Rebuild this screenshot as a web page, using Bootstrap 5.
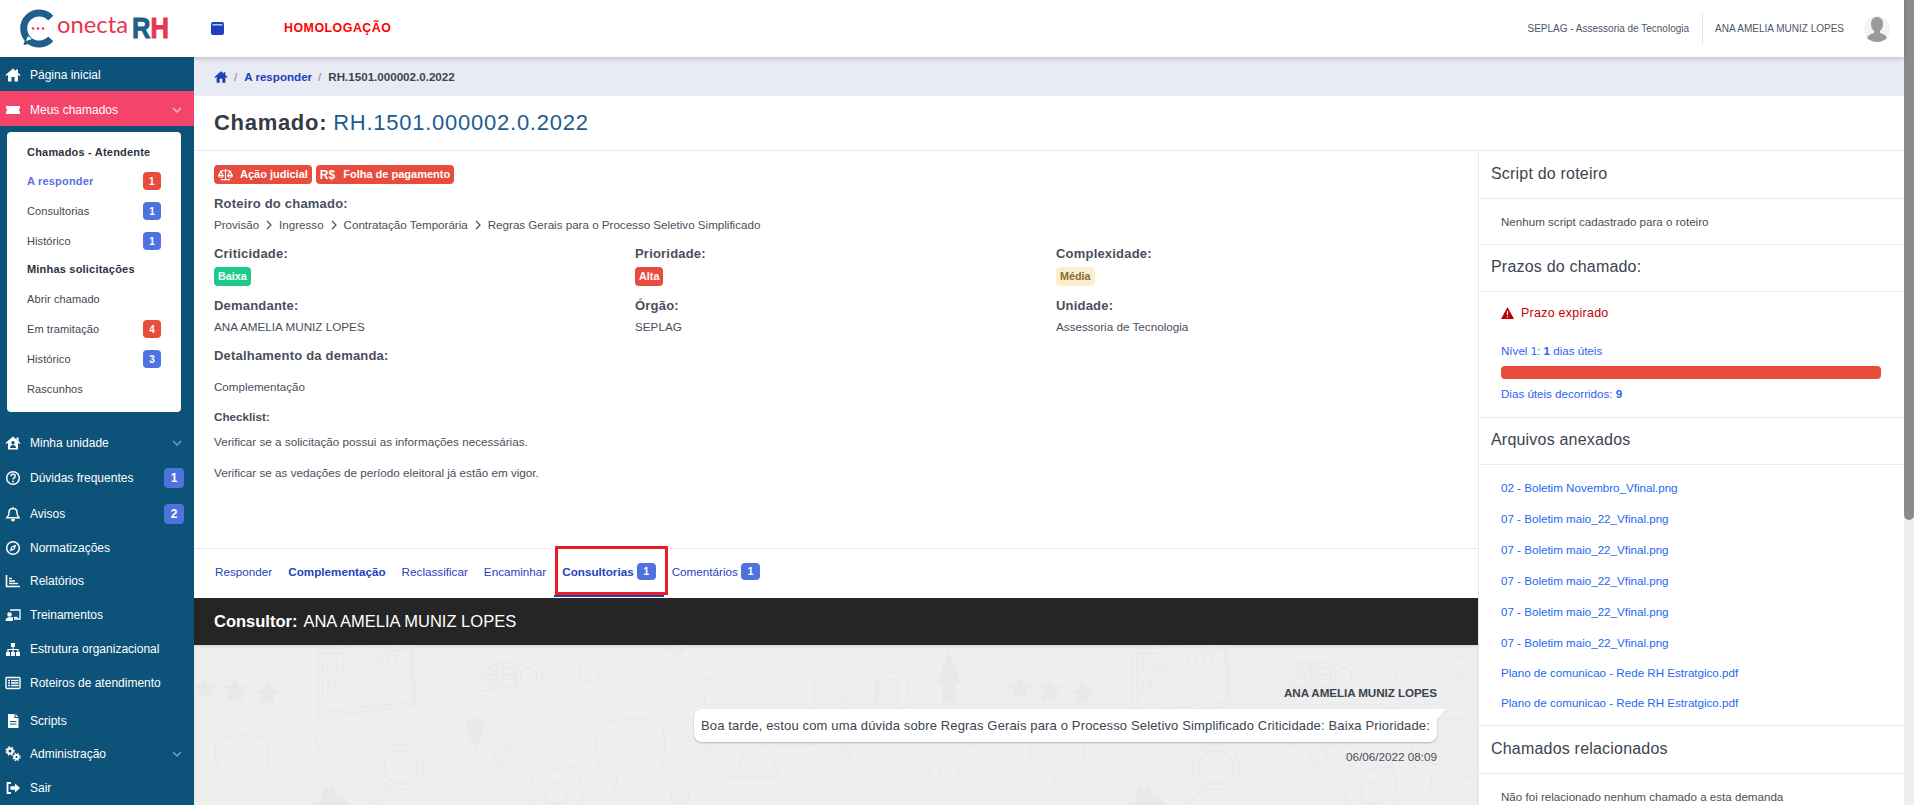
<!DOCTYPE html>
<html lang="pt-BR">
<head>
    <meta charset="UTF-8" />
    <meta name="viewport" content="width=device-width, initial-scale=1" />
    <title>Conecta RH</title>
    <link href="https://cdn.jsdelivr.net/npm/bootstrap@5.3.3/dist/css/bootstrap.min.css" rel="stylesheet">
    <style>
        html, body { height: 805px; overflow: hidden; }
        body { font-family: "Liberation Sans", Arial, sans-serif; font-size: 12px; color: #495057; background: #fff; }
        .pagina { height: 805px; width: 1914px; }
        .miolo { width: 1904px; }
        /* barra de rolagem desenhada */
        .rolagem { width: 10px; background: #eee; }
        .rolagem-cursor { display: block; height: 520px; background: #8a8a8a; border-radius: 0 0 5px 5px; }
        /* topo */
        .topo { height: 57px; background: #fff; position: relative; z-index: 2; box-shadow: 0 1px 5px rgba(60,60,80,.3); }
        .topo-logo { margin-left: 17px; width: 194px; }
        .topo-homolog { margin-left: 60px; color: #f00; font-weight: 700; font-size: 12.4px; letter-spacing: .5px; }
        .topo-dir { font-size: 10px; color: #4d5666; }
        .topo-orgao { padding-right: 13px; }
        .topo-nome { border-left: 1px solid #e3e5ea; height: 32px; padding-left: 12px; margin-right: 20px; }
        .topo-avatar { margin-right: 14px; }
        /* lateral */
        .lateral { width: 194px; background: #0d5279; height: 748px; flex-shrink: 0; overflow: hidden; }
        .item-lateral { height: 34px; padding: 2px 10px 0 5px; color: #fff; font-size: 12px; text-decoration: none; }
        .item-lateral svg { width: 16px; height: 16px; margin-right: 9px; flex-shrink: 0; }
        .item-alto { height: 35px; }
        .item-ativo { background: #f44469; }
        .item-desce { margin-top: 1px; }
        .item-justo { height: 33px; }
        .item-baixo { height: 33px; margin-top: 4px; }
        .seta-lateral { width: 10px !important; height: 10px !important; margin-right: 2px !important; margin-left: auto; }
        .selo-lateral { margin-left: auto; width: 20px; height: 20px; background: #4e73df; color: #fff; border-radius: 4px; font-size: 12px; font-weight: 700; }
        .sub-lateral { background: #fff; margin: 6px 13px 13px 7px; height: 280px; border-radius: 4px; padding: 4px 20px 0 20px; }
        .item-sub { height: 30px; font-size: 11px; color: #3f4650; letter-spacing: .1px; }
        .item-sub-forte { font-weight: 700; color: #2c3340; letter-spacing: .2px; }
        .item-sub-primeiro { padding-top: 2px; }
        .item-sub-curto { height: 28px; padding-bottom: 2px; }
        .item-sub-ativo { color: #5a6fe0; font-weight: 700; letter-spacing: .2px; }
        .selo-sub { margin-left: auto; width: 18px; height: 18px; border-radius: 4px; color: #fff; font-size: 10px; font-weight: 700; }
        .selo-azul { background: #4e73df; }
        .selo-verm { background: #e74c3c; }
        /* conteudo */
        .conteudo { min-width: 0; height: 748px; }
        .trilha { height: 39px; background: #e8ebf3; padding-left: 20px; font-size: 11.6px; }
        .trilha a { color: #2040b8; font-weight: 700; text-decoration: none; }
        .trilha svg { width: 14px; height: 14px; display: block; }
        .trilha-sep { color: #7c8594; margin: 0 7px 0 6px; }
        .trilha-atual { color: #3d4450; font-weight: 700; }
        .titulo-chamado { height: 55px; padding: 0 0 2px 20px; border-bottom: 1px solid #e9ebef; font-size: 22px; color: #1d5c91; letter-spacing: .75px; }
        .titulo-chamado b { color: #343a46; letter-spacing: .7px; margin-right: 6px; }
        .coluna-esq { width: 1284px; flex-shrink: 0; }
        .detalhes { height: 398px; padding: 14px 1px 0 20px; border-bottom: 1px solid #e9ebef; }
        .etiqueta { height: 19px; background: #e74c3c; color: #fff; font-weight: 700; font-size: 11px; border-radius: 4px; padding: 0 4px; }
        .etiqueta svg { width: 15px; height: 13px; margin-right: 7px; }
        .etiqueta-rs { font-size: 12px; margin-right: 8px; }
        .rotulo { font-size: 13px; font-weight: 700; color: #4a4f5c; line-height: 20px; letter-spacing: .2px; }
        .rotulo-menor { font-size: 11.7px; letter-spacing: 0; }
        .valor { font-size: 11.6px; color: #4a4f5c; line-height: 20px; }
        .valor-largo { font-size: 11.7px; }
        .valor-check { font-size: 11.7px; }
        .caminho { font-size: 11.6px; }
        .caminho svg { width: 8px; height: 10px; margin: 0 6px; }
        .selo-nivel { height: 19px; width: fit-content; display: flex; align-items: center; padding: 0 4px; border-radius: 4px; font-size: 10.8px; font-weight: 700; color: #fff; }
        .nivel-baixa { background: #1ccb8a; }
        .nivel-alta { background: #e74c3c; }
        .nivel-media { background: #fdeed0; color: #8a6a2c; }
        .esp-1 { margin-top: 1px; }
        .esp-3 { margin-top: 3px; }
        .esp-5 { margin-top: 5px; }
        .esp-9 { margin-top: 9px; }
        .esp-10 { margin-top: 10px; }
        .esp-11 { margin-top: 11px; }
        .abas { height: 49px; padding-left: 21px; font-size: 11.7px; }
        .aba { color: #2643bd; text-decoration: none; height: 49px; margin-right: 16px; padding-bottom: 4px; position: relative; }
        .aba-forte { font-weight: 700; }
        .aba-ativa { padding: 0 8px 4px; margin: 0 8px 0 -8px; }
        .aba-ativa::after { content: ""; position: absolute; left: 0; right: 0; bottom: 1px; height: 2px; background: #2040b8; }
        .aba-destaque { position: absolute; left: 1px; top: -3px; width: 113px; height: 49px; border: 3px solid #ed1c24; }
        .selo-aba { width: 19px; height: 17px; border-radius: 4px; background: #4e73df; color: #fff; font-size: 10px; font-weight: 700; margin-left: 3px; }
        .faixa { height: 47px; background: #252525; color: #fff; padding-left: 20px; font-size: 16.5px; }
        .faixa b { margin-right: 6px; }
        .conversa { position: relative; height: 160px; background: #eee; overflow: hidden; padding: 40px 41px 0 0; box-shadow: inset 0 2px 3px rgba(0,0,0,.08); }
        .conversa-fundo { position: absolute; left: 0; top: 0; width: 100%; height: 100%; }
        .conversa-msg { position: relative; }
        .msg-autor { font-size: 11.7px; font-weight: 700; color: #3d4450; line-height: 16px; margin-bottom: 8px; letter-spacing: -.1px; }
        .msg-balao { position: relative; height: 33px; background: #fff; border-radius: 8px 0 8px 8px; padding: 0 7px; font-size: 13px; color: #3d4450; box-shadow: 0 1px 2px rgba(0,0,0,.25); letter-spacing: .15px; }
        .msg-balao::after { content: ""; position: absolute; right: -9px; top: 0; border-top: 9px solid #fff; border-right: 9px solid transparent; }
        .msg-data { font-size: 11.7px; color: #4a4f5c; line-height: 16px; margin-top: 7px; }
        /* painel da direita */
        .painel { width: 426px; flex-shrink: 0; border-left: 1px solid #e9ebef; }
        .painel-cab { height: 48px; padding: 0 0 2px 12px; border-bottom: 1px solid #e9ebef; font-size: 16px; color: #3d4450; letter-spacing: .2px; }
        .painel-cab-alto { height: 47px; }
        .painel-corpo { padding-left: 22px; border-bottom: 1px solid #e9ebef; font-size: 11.6px; }
        .corpo-script { height: 46px; }
        .corpo-prazos { height: 126px; padding-top: 11px; padding-right: 23px; color: #2c62f0; }
        .corpo-arquivos { height: 261px; padding-top: 7px; }
        .corpo-relacionados { padding-top: 14px; }
        .prazo-aviso { height: 20px; color: #c00000; font-size: 12.4px; letter-spacing: .3px; }
        .prazo-aviso svg { width: 13px; height: 12px; margin-right: 7px; }
        .prazo-linha { line-height: 20px; }
        .prazo-nivel { margin-top: 18px; }
        .prazo-barra { height: 13px; border-radius: 4px; background: #e74c3c; margin: 5px 0; }
        .arquivo { height: 31px; color: #2468f2; text-decoration: none; }
        .arquivo:nth-child(n+7) { height: 30px; }
    </style>
</head>
<body>
<div class="pagina d-flex">
    <div class="miolo">
        <!-- TOPO -->
        <header class="topo d-flex align-items-center">
            <div class="topo-logo">
                <svg width="156" height="40" viewBox="0 0 156 40">
                    <path d="M33.700 9.100A15.500 15.500 0 1 0 33.700 29.900" fill="none" stroke="#1f5f8b" stroke-width="7"/>
                    <path d="M9 27l-2.500 9 11-2z" fill="#1f5f8b"/>
                    <path d="M11 27l-2 5 6-2z" fill="#fff"/>
                    <circle cx="16" cy="19.500" r="1.300" fill="#e8354f"/><circle cx="21" cy="19.500" r="1.300" fill="#e8354f"/><circle cx="26" cy="19.500" r="1.300" fill="#e8354f"/>
                    <text x="40" y="24" font-family="Lato, sans-serif" font-size="23" fill="#e8354f" textLength="71" lengthAdjust="spacingAndGlyphs">onecta</text>
                    <text x="115" y="28.500" font-family="Liberation Sans, sans-serif" font-weight="700" font-size="30" stroke-width=".9" textLength="37" lengthAdjust="spacingAndGlyphs"><tspan fill="#1f5f8b" stroke="#1f5f8b">R</tspan><tspan fill="#e8354f" stroke="#e8354f">H</tspan></text>
                </svg>
            </div>
            <svg width="13" height="13" viewBox="0 0 13 13"><rect width="13" height="13" rx="2" fill="#1f3fbf"/><rect x="1.500" y="2" width="10" height="1.500" fill="#b9c6ee"/></svg>
            <span class="topo-homolog">HOMOLOGAÇÃO</span>
            <div class="topo-dir ms-auto d-flex align-items-center">
                <span class="topo-orgao">SEPLAG - Assessoria de Tecnologia</span>
                <span class="topo-nome d-flex align-items-center">ANA AMELIA MUNIZ LOPES</span>
                <svg class="topo-avatar" width="26" height="26" viewBox="0 0 26 26"><circle cx="13" cy="13" r="13" fill="#f3f3f3"/><path d="M13 1c4 0 6 3 6 7 0 3-1 5-3 7v2c3 1 6 2 7 5-2 2-6 4-10 4s-8-2-10-4c1-3 4-4 7-5v-2c-2-2-3-4-3-7 0-4 2-7 6-7z" fill="#9a9a9a"/></svg>
            </div>
        </header>
        <div class="d-flex">
            <!-- LATERAL -->
            <nav class="lateral">
                <a class="item-lateral d-flex align-items-center"><svg viewBox="0 0 16 16"><path d="M8 1.500L0.500 8l1 1L3 7.800V14.500h3.500V10h3v4.500H13V7.800L14.500 9l1-1L13 5.800V2.500h-2v1.600z" fill="#fff"/></svg>Página inicial</a>
                <a class="item-lateral item-alto item-ativo d-flex align-items-center"><svg viewBox="0 0 16 16"><path d="M1 4h14v2.800a1.200 1.200 0 0 0 0 2.400V12H1V9.200a1.200 1.200 0 0 0 0-2.400z" fill="#fff"/></svg>Meus chamados<svg class="seta-lateral" viewBox="0 0 10 10"><path d="M1 3l4 4 4-4" fill="none" stroke="#fff" stroke-opacity=".6" stroke-width="1.500"/></svg></a>
                <div class="sub-lateral">
                    <div class="item-sub item-sub-forte item-sub-primeiro d-flex align-items-center">Chamados - Atendente</div>
                    <div class="item-sub item-sub-ativo d-flex align-items-center">A responder<span class="selo-sub selo-verm d-flex align-items-center justify-content-center">1</span></div>
                    <div class="item-sub d-flex align-items-center">Consultorias<span class="selo-sub selo-azul d-flex align-items-center justify-content-center">1</span></div>
                    <div class="item-sub d-flex align-items-center">Histórico<span class="selo-sub selo-azul d-flex align-items-center justify-content-center">1</span></div>
                    <div class="item-sub item-sub-forte item-sub-curto d-flex align-items-center">Minhas solicitações</div>
                    <div class="item-sub d-flex align-items-center">Abrir chamado</div>
                    <div class="item-sub d-flex align-items-center">Em tramitação<span class="selo-sub selo-verm d-flex align-items-center justify-content-center">4</span></div>
                    <div class="item-sub d-flex align-items-center">Histórico<span class="selo-sub selo-azul d-flex align-items-center justify-content-center">3</span></div>
                    <div class="item-sub d-flex align-items-center">Rascunhos</div>
                </div>
                <a class="item-lateral d-flex align-items-center"><svg viewBox="0 0 16 16"><path fill-rule="evenodd" d="M8 1.500L0.500 8l1 1L3 7.800V14.500h10V7.800L14.500 9l1-1L13.500 6.200V2.500h-2v2zM8 6a1.700 1.700 0 1 0 0 3.400A1.700 1.700 0 0 0 8 6zM5 13h6c0-2-1.300-3-3-3s-3 1-3 3z" fill="#fff"/></svg>Minha unidade<svg class="seta-lateral" viewBox="0 0 10 10"><path d="M1 3l4 4 4-4" fill="none" stroke="#fff" stroke-opacity=".45" stroke-width="1.500"/></svg></a>
                <a class="item-lateral item-alto d-flex align-items-center"><svg viewBox="0 0 16 16"><circle cx="8" cy="8" r="6.300" fill="none" stroke="#fff" stroke-width="1.500"/><path d="M5.800 6.300C5.900 4.900 6.900 4.300 8 4.300c1.300 0 2.200.8 2.200 1.900 0 1.700-2.200 1.600-2.200 3.300" fill="none" stroke="#fff" stroke-width="1.400"/><circle cx="8" cy="11.500" r=".9" fill="#fff"/></svg>Dúvidas frequentes<span class="selo-lateral d-flex align-items-center justify-content-center">1</span></a>
                <a class="item-lateral item-alto item-desce d-flex align-items-center"><svg viewBox="0 0 16 16"><path d="M8 2.500c-2.500 0-4 1.900-4 4.200 0 3-1.500 4.300-2 5h12c-.5-.7-2-2-2-5 0-2.300-1.500-4.200-4-4.200z" fill="none" stroke="#fff" stroke-width="1.500"/><path d="M8 .8v1.700M6.500 13.500a1.500 1.500 0 0 0 3 0z" stroke="#fff" fill="#fff"/></svg>Avisos<span class="selo-lateral d-flex align-items-center justify-content-center">2</span></a>
                <a class="item-lateral item-justo d-flex align-items-center"><svg viewBox="0 0 16 16"><circle cx="8" cy="8" r="6.300" fill="none" stroke="#fff" stroke-width="1.500"/><path d="M11.500 4.500L9.500 9.500 4.500 11.500 6.500 6.500z" fill="#fff"/><circle cx="8" cy="8" r="1" fill="#0d5279"/></svg>Normatizações</a>
                <a class="item-lateral d-flex align-items-center"><svg viewBox="0 0 16 16"><path d="M1.500 2v11.500H15" fill="none" stroke="#fff" stroke-width="1.600"/><path d="M4 10.500h9M4 8h6M4 5.500h3" stroke="#fff" stroke-width="1.600"/></svg>Relatórios</a>
                <a class="item-lateral d-flex align-items-center"><svg viewBox="0 0 16 16"><path d="M5 3h10v9H9" fill="none" stroke="#fff" stroke-width="1.300"/><path d="M9 10.500h3.500" stroke="#fff" stroke-width="1.300"/><circle cx="4.500" cy="7.500" r="2.300" fill="#fff"/><path d="M.5 14c0-2.500 1.500-3.800 3.500-3.800h4V14z" fill="#fff"/></svg>Treinamentos</a>
                <a class="item-lateral d-flex align-items-center"><svg viewBox="0 0 16 16"><path d="M6 2h4v4H6zM1 11h4v4H1zM6 11h4v4H6zM11 11h4v4h-4z" fill="#fff"/><path d="M8 6v5M3 11V8.500h10V11" fill="none" stroke="#fff" stroke-width="1.200"/></svg>Estrutura organizacional</a>
                <a class="item-lateral d-flex align-items-center"><svg viewBox="0 0 16 16"><rect x="1" y="2.500" width="14" height="11" rx="1" fill="none" stroke="#fff" stroke-width="1.400"/><path d="M3 5.500h2M6 5.500h7.500M3 8h2M6 8h7.500M3 10.500h2M6 10.500h7.500" stroke="#fff" stroke-width="1.300"/></svg>Roteiros de atendimento</a>
                <a class="item-lateral item-baixo d-flex align-items-center"><svg viewBox="0 0 16 16"><path fill-rule="evenodd" d="M3 1h6.500v4H13.500v10H3zM10.500 1l3 3h-3zM5 8h6.500v1H5zM5 10.500h6.500v1H5z" fill="#fff"/></svg>Scripts</a>
                <a class="item-lateral d-flex align-items-center"><svg viewBox="0 0 16 16"><circle cx="5" cy="5" r="2.500" fill="none" stroke="#fff" stroke-width="2"/><circle cx="5" cy="5" r="4" fill="none" stroke="#fff" stroke-width="1.300" stroke-dasharray="1.800 1.500"/><circle cx="11.500" cy="11" r="2" fill="none" stroke="#fff" stroke-width="1.800"/><circle cx="11.500" cy="11" r="3.500" fill="none" stroke="#fff" stroke-width="1.200" stroke-dasharray="1.600 1.200"/></svg>Administração<svg class="seta-lateral" viewBox="0 0 10 10"><path d="M1 3l4 4 4-4" fill="none" stroke="#fff" stroke-opacity=".45" stroke-width="1.500"/></svg></a>
                <a class="item-lateral d-flex align-items-center"><svg viewBox="0 0 16 16"><path d="M6 3H2.500v10H6" fill="none" stroke="#fff" stroke-width="1.800"/><path d="M5.500 6.300H10V3.500L15 8l-5 4.500V9.700H5.500z" fill="#fff"/></svg>Sair</a>
            </nav>
            <!-- CONTEUDO -->
            <main class="conteudo flex-grow-1">
                <div class="trilha d-flex align-items-center">
                    <a href="#"><svg viewBox="0 0 16 16"><path d="M8 1.500L0.500 8l1 1L3 7.800V14.500h3.500V10h3v4.500H13V7.800L14.500 9l1-1L13 5.800V2.500h-2v1.600z" fill="#2040b8"/></svg></a>
                    <span class="trilha-sep">/</span><a href="#">A responder</a><span class="trilha-sep">/</span><span class="trilha-atual">RH.1501.000002.0.2022</span>
                </div>
                <div class="titulo-chamado d-flex align-items-center"><b>Chamado:</b> RH.1501.000002.0.2022</div>
                <div class="d-flex">
                    <div class="coluna-esq">
                        <section class="detalhes">
                            <div class="d-flex gap-1">
                                <span class="etiqueta d-inline-flex align-items-center"><svg viewBox="0 0 16 14"><path d="M8 1v11M3 12.500h10M3 3h10M3 3L.8 8M3 3l2.200 5M13 3l-2.200 5M13 3l2.200 5M.5 8a2.500 2 0 0 0 5 0zM10.500 8a2.500 2 0 0 0 5 0z" fill="none" stroke="#fff" stroke-width="1.200"/></svg>Ação judicial</span>
                                <span class="etiqueta d-inline-flex align-items-center"><span class="etiqueta-rs">R$</span>Folha de pagamento</span>
                            </div>
                            <div class="rotulo esp-10">Roteiro do chamado:</div>
                            <div class="valor caminho esp-1 d-flex align-items-center">Provisão<svg viewBox="0 0 8 10"><path d="M2 1l4 4-4 4" fill="none" stroke="#4a4f5c" stroke-width="1.200"/></svg>Ingresso<svg viewBox="0 0 8 10"><path d="M2 1l4 4-4 4" fill="none" stroke="#4a4f5c" stroke-width="1.200"/></svg>Contratação Temporária<svg viewBox="0 0 8 10"><path d="M2 1l4 4-4 4" fill="none" stroke="#4a4f5c" stroke-width="1.200"/></svg>Regras Gerais para o Processo Seletivo Simplificado</div>
                            <div class="row g-0 esp-9">
                                <div class="col-4"><div class="rotulo">Criticidade:</div><span class="selo-nivel nivel-baixa esp-3">Baixa</span></div>
                                <div class="col-4"><div class="rotulo">Prioridade:</div><span class="selo-nivel nivel-alta esp-3">Alta</span></div>
                                <div class="col-4"><div class="rotulo">Complexidade:</div><span class="selo-nivel nivel-media esp-3">Média</span></div>
                            </div>
                            <div class="row g-0 esp-10">
                                <div class="col-4"><div class="rotulo">Demandante:</div><div class="valor valor-largo esp-1">ANA AMELIA MUNIZ LOPES</div></div>
                                <div class="col-4"><div class="rotulo">Órgão:</div><div class="valor valor-largo esp-1">SEPLAG</div></div>
                                <div class="col-4"><div class="rotulo">Unidade:</div><div class="valor valor-largo esp-1">Assessoria de Tecnologia</div></div>
                            </div>
                            <div class="rotulo esp-9">Detalhamento da demanda:</div>
                            <div class="valor esp-11">Complementação</div>
                            <div class="rotulo rotulo-menor esp-10">Checklist:</div>
                            <div class="valor valor-check esp-5">Verificar se a solicitação possui as informações necessárias.</div>
                            <div class="valor valor-check esp-11">Verificar se as vedações de período eleitoral já estão em vigor.</div>
                        </section>
                        <div class="abas d-flex align-items-center">
                            <a class="aba d-flex align-items-center">Responder</a>
                            <a class="aba aba-forte d-flex align-items-center">Complementação</a>
                            <a class="aba d-flex align-items-center">Reclassificar</a>
                            <a class="aba d-flex align-items-center">Encaminhar</a>
                            <a class="aba aba-forte aba-ativa d-flex align-items-center">Consultorias<span class="selo-aba d-flex align-items-center justify-content-center">1</span><span class="aba-destaque"></span></a>
                            <a class="aba d-flex align-items-center">Comentários<span class="selo-aba d-flex align-items-center justify-content-center">1</span></a>
                        </div>
                        <div class="faixa d-flex align-items-center"><b>Consultor:</b> ANA AMELIA MUNIZ LOPES</div>
                        <div class="conversa">
                            <!-- fundo de rabiscos -->
                            <svg class="conversa-fundo" aria-hidden="true">
                                <defs>
                                    <pattern id="rabiscos" width="815" height="160" patternUnits="userSpaceOnUse">
                                        <g fill="none" stroke="#e8e8e8" stroke-width="1.200">
                                            <path d="M11 33l3 7 7 1-5 5 1 7-6-3-6 3 1-7-5-5 7-1zM41 33l3 8 8 1-6 5 2 8-7-4-7 4 2-8-6-5 8-1zM73 38l3 7 7 1-5 5 1 8-6-4-6 4 1-8-5-5 7-1z" fill="#e9e9e9"/>
                                            <path d="M124 4l94-4 4 60-98 12z"/><path d="M128 9l88-4 3 52-90 10z"/>
                                            <path d="M134 16h9v10h-9zM149 15h9v10h-9zM164 14h9v10h-9zM179 12h9v10h-9zM194 10h9v10h-9zM134 36h8v10h-8z"/>
                                            <path d="M190 60l14-20"/>
                                            <circle cx="259" cy="42" r="4"/>
                                            <path d="M435 17L492 0 462 44 452 30zM452 30L492 0"/>
                                            <path d="M396 14c-9 1-13 9-10 17 3 7 12 9 17 3 4-5 2-12-4-12-4 0-6 4-4 7"/>
                                            <path d="M510 34l110-4 1 70-110 4zM516 60h98"/><path d="M550 108l-6 20h40l-6-22M530 132h56"/>
                                            <path d="M755 7l-11 30h6l-2 20h14l-2-20h6z" fill="#e9e9e9"/>
                                            <path d="M682 32l30-8 4 36-12 4V34l-20 4v28c-4 4-10 3-10-2s6-6 8-4z"/>
                                            <path d="M650 50c-5 7-6 12 0 14 6-2 5-7 0-14zM652 102c-4 6-4 10 0 12 4-2 4-6 0-12z"/>
                                            <circle cx="724" cy="125" r="12"/><circle cx="724" cy="125" r="22" stroke-dasharray="7 4"/><path d="M780 100c-20 0-24 40 0 48"/>
                                            <path d="M24 94c10-4 30-4 46-2 6 3 6 26 2 32-8 3-18 3-24 2l-2 10-6-10c-6 0-14 0-16-4-4-8-4-24 0-28z"/>
                                            <path d="M66 88c14-4 36-4 52 0 8 6 8 24 4 28-4 2-10 2-14 2l-2 9-7-9"/>
                                            <circle cx="248" cy="83" r="9"/>
                                            <path d="M280 76c3-5 10-2 9 6-1 8-5 14-7 20-3-6-9-13-9-20 0-8 5-10 7-6z" fill="#e9e9e9"/>
                                            <path d="M300 112l80-48 8-1-4 8-78 50zM305 118l-4-6M312 100l8 12"/>
                                            <circle cx="207" cy="122" r="23"/><circle cx="207" cy="122" r="17"/><circle cx="207" cy="112" r="4"/><path d="M194 142l-16 20"/>
                                            <path d="M405 80c18-8 50-8 62-2 6 16 4 44-2 54-10 2-20 2-28 2l-16 10 2-12c-8-2-14-4-16-8-6-14-6-34-2-44z"/>
                                            <path d="M418 100v3M436 100v3M416 112c6 10 18 10 24 0"/>
                                            <path d="M338 126l46-4 6 38M338 126l-2 34"/><circle cx="362" cy="148" r="11"/>
                                            <path d="M480 160c-6-10-2-20 6-20s12 10 6 20"/>
                                            <path d="M118 160l10-6 3-12 4 4 4-6 4 12 8 2 6 6" fill="#e9e9e9"/>
                                        </g>
                                        <text x="280" y="46" font-family="Liberation Sans, sans-serif" font-weight="700" font-size="40" fill="none" stroke="#e8e8e8" stroke-width="1.200" textLength="70">SEO</text>
                                    </pattern>
                                </defs>
                                <rect width="100%" height="100%" fill="url(#rabiscos)"/>
                            </svg>
                            <div class="conversa-msg d-flex flex-column align-items-end">
                                <div class="msg-autor">ANA AMELIA MUNIZ LOPES</div>
                                <div class="msg-balao d-flex align-items-center">Boa tarde, estou com uma dúvida sobre Regras Gerais para o Processo Seletivo Simplificado Criticidade: Baixa Prioridade:</div>
                                <div class="msg-data">06/06/2022 08:09</div>
                            </div>
                        </div>
                    </div>
                    <!-- PAINEL DIREITO -->
                    <aside class="painel">
                        <div class="painel-cab d-flex align-items-center">Script do roteiro</div>
                        <div class="painel-corpo corpo-script d-flex align-items-center">Nenhum script cadastrado para o roteiro</div>
                        <div class="painel-cab painel-cab-alto d-flex align-items-center">Prazos do chamado:</div>
                        <div class="painel-corpo corpo-prazos">
                            <div class="prazo-aviso d-flex align-items-center"><svg viewBox="0 0 13 12"><path d="M6.500 0L13 12H0z" fill="#c00000"/><path d="M6.500 4v4M6.500 9.300v1.200" stroke="#fff" stroke-width="1.200"/></svg>Prazo expirado</div>
                            <div class="prazo-linha prazo-nivel">Nível 1: <b>1</b> dias úteis</div>
                            <div class="prazo-barra"></div>
                            <div class="prazo-linha">Dias úteis decorridos: <b>9</b></div>
                        </div>
                        <div class="painel-cab painel-cab-alto d-flex align-items-center">Arquivos anexados</div>
                        <div class="painel-corpo corpo-arquivos">
                            <a class="arquivo d-flex align-items-center">02 - Boletim Novembro_Vfinal.png</a>
                            <a class="arquivo d-flex align-items-center">07 - Boletim maio_22_Vfinal.png</a>
                            <a class="arquivo d-flex align-items-center">07 - Boletim maio_22_Vfinal.png</a>
                            <a class="arquivo d-flex align-items-center">07 - Boletim maio_22_Vfinal.png</a>
                            <a class="arquivo d-flex align-items-center">07 - Boletim maio_22_Vfinal.png</a>
                            <a class="arquivo d-flex align-items-center">07 - Boletim maio_22_Vfinal.png</a>
                            <a class="arquivo d-flex align-items-center">Plano de comunicao - Rede RH Estratgico.pdf</a>
                            <a class="arquivo d-flex align-items-center">Plano de comunicao - Rede RH Estratgico.pdf</a>
                        </div>
                        <div class="painel-cab d-flex align-items-center">Chamados relacionados</div>
                        <div class="painel-corpo corpo-relacionados">Não foi relacionado nenhum chamado a esta demanda</div>
                    </aside>
                </div>
            </main>
        </div>
    </div>
    <div class="rolagem"><span class="rolagem-cursor"></span></div>
</div>
<script src="https://cdn.jsdelivr.net/npm/bootstrap@5.3.3/dist/js/bootstrap.bundle.min.js"></script>
</body>
</html>
